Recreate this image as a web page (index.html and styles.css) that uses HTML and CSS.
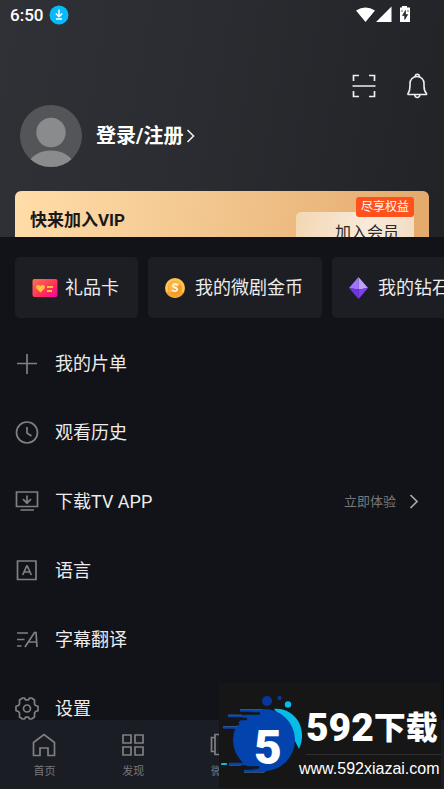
FILE: index.html
```html
<!DOCTYPE html>
<html lang="zh-CN">
<head>
<meta charset="utf-8">
<meta name="viewport" content="width=device-width, initial-scale=1">
<title>我的</title>
<link rel="stylesheet" href="styles.css">
</head>
<body>
<div class="app">
  <header class="top">
    <div class="status">
      <span class="time">6:50</span>
      <svg class="download-badge" width="20" height="20" viewBox="0 0 20 20"><circle cx="10" cy="10" r="9.500" fill="#08b9fb"/><path d="M10 4.500v7M6.800 8.500L10 11.700l3.200-3.200M7 14h6" fill="none" stroke="#fff" stroke-width="1.500"/></svg>
      <svg class="signals" width="56" height="18" viewBox="0 0 56 18"><path d="M0 4.500Q9.500-1.500 19 4.500L9.500 16zM20 16L35.500.5V16z" fill="#fff"/><path d="M44 1.500h2V0h5v1.500h3V16H44z" fill="#fff"/><path d="M49.500 4.500L46.500 9.500h2.200v4l3-5h-2.200zM46 4v2M52 4v2" fill="#292a2e" stroke="#292a2e" stroke-width=".7"/></svg>
    </div>
    <div class="actions">
      <button class="icon-button" aria-label="扫一扫"><svg width="24" height="24" viewBox="0 0 24 24"><path d="M1.500 7V1.500H7M17 1.500h5.500V7M1.500 17v5.500H7M17 22.500h5.500V17M.5 12h23" fill="none" stroke="#eee" stroke-width="1.700"/></svg></button>
      <button class="icon-button" aria-label="通知"><svg width="24" height="26" viewBox="0 0 24 26"><path d="M3 20.500c1.500-2 2-4 2-7.500V10.500c0-4 3-7 7-7s7 3 7 7V13c0 3.500.5 5.500 2.500 7.500v1H3zM10.300 3.300a2 2 0 1 1 4 0M9.500 21.500c.5 4 5 4 5.500 0" fill="none" stroke="#eee" stroke-width="1.600" stroke-linejoin="round"/></svg></button>
    </div>
    <a class="profile" href="#login">
      <svg width="62" height="62" viewBox="0 0 62 62"><defs><clipPath id="face"><circle cx="31" cy="31" r="31"/></clipPath></defs><circle cx="31" cy="31" r="31" fill="#545558"/><g clip-path="url(#face)" fill="#8a8b8d"><circle cx="31" cy="27.500" r="14.700"/><path d="M7 62C11 40 51 40 55 62z"/></g></svg>
      <span class="login">登录/注册</span>
      <svg class="login-arrow" width="10" height="14" viewBox="0 0 10 14"><path d="M1.500 1l6 6-6 6" fill="none" stroke="#eee" stroke-width="1.600"/></svg>
    </a>
    <section class="vip">
      <h2 class="vip-title">快来加入VIP</h2>
      <button class="join">加入会员</button>
      <span class="benefit">尽享权益</span>
    </section>
  </header>

  <main class="content">
    <div class="wallet">
      <a class="chip" href="#card"><svg width="26" height="18" viewBox="0 0 26 18"><defs><linearGradient id="gift" x2="1" y2="1"><stop stop-color="#ff7550"/><stop offset=".65" stop-color="#ff285d"/><stop offset="1" stop-color="#f500ad"/></linearGradient></defs><rect x=".5" width="25" height="18" rx="2" fill="url(#gift)"/><path d="M8.500 13.500L4.500 9.500C3 7 6 4.500 8.500 7c2.500-2.500 5.500 0 4 2.500zM15 7h6v2h-6zM15 11h5v2h-5z" fill="#ffc23d"/></svg><span>礼品卡</span></a>
      <a class="chip" href="#coins"><svg class="coin" width="20" height="20" viewBox="0 0 20 20"><circle cx="10" cy="10" r="10" fill="#ffc44d"/><path d="M1 14a10 10 0 0 0 18 0" fill="#f6a52e"/><circle cx="10" cy="10" r="7" fill="#f59b2a"/><path d="M4 8a7 7 0 0 1 12-2L5 15q-2-3-1-7" fill="#ffb747"/><path d="M13 7c-2-1.300-5-1-5.100.9-.1 2.200 4.600 1.400 4.300 3.600-.2 2-3.500 2.100-5.400.8" fill="none" stroke="#fff6d9" stroke-width="1.900"/></svg><span>我的微剧金币</span></a>
      <a class="chip" href="#diamonds"><svg class="diamond" width="19" height="22" viewBox="0 0 19 22"><path d="M9.500 0L0 11l9.500 1.500z" fill="#a273ff"/><path d="M9.500 0L19 11l-9.500 1.500z" fill="#bea0ff"/><path d="M0 11l9.500 1.500V22z" fill="#7133e8"/><path d="M19 11l-9.500 1.500V22z" fill="#813dfa"/></svg><span>我的钻石</span></a>
    </div>
    <nav class="menu" aria-label="我的功能">
      <a class="row" href="#list"><svg class="line" width="24" height="24" viewBox="0 0 24 24"><path d="M2 11.500h20M12 2v20"/></svg><span>我的片单</span></a>
      <a class="row" href="#history"><svg class="line" width="24" height="24" viewBox="0 0 24 24"><circle cx="12" cy="11.500" r="10.500"/><path d="M12 6v6l4.500 3"/></svg><span>观看历史</span></a>
      <a class="row" href="#tv"><svg class="line" width="24" height="24" viewBox="0 0 24 24"><path d="M1.500 2h21v14.500h-21zM5.500 20h13.500M12 5.500V13M8 9.200l4 4 4-4"/></svg><span>下载TV APP</span><span class="hint">立即体验</span><svg class="row-arrow" width="10" height="16" viewBox="0 0 10 16"><path d="M1.500 1L8 7.500 1.500 14" fill="none" stroke="#aaabad" stroke-width="1.700"/></svg></a>
      <a class="row" href="#language"><svg class="line" width="24" height="24" viewBox="0 0 24 24"><path d="M2.500 2h18.500v18.500H2.500zM7.700 16l4-9h.6l4 9M9.200 13h5.600"/></svg><span>语言</span></a>
      <a class="row" href="#subtitle"><svg class="line" width="24" height="24" viewBox="0 0 24 24"><path d="M2 5h11M2 11.500h7.500M2 18h4.500M10 19L19.500 4.500h1.500l1 14.500M13 14h8.500"/></svg><span>字幕翻译</span></a>
      <a class="row" href="#settings"><svg class="line" width="24" height="24" viewBox="0 0 24 24"><path d="M7.500 1h2l1 1.800h3l1-1.800h2l3 2v4l1 1.500 2.500.7v4.600l-2.500.7-1 1.500v4l-3 2h-2l-1-1.800h-3l-1 1.800h-2l-3-2v-4l-1-1.500-2.500-.7V9.200L3.500 8.500l1-1.500V3z" stroke-linejoin="round"/><circle cx="12" cy="11.500" r="3.500"/></svg><span>设置</span></a>
    </nav>
  </main>

  <nav class="tabs" aria-label="主导航">
    <a class="tab" href="#home"><svg class="line" width="24" height="24" viewBox="0 0 24 24"><path d="M1.500 9.500L12 1.500l10.500 8v13h-6.500V15H8v7.500H1.500z"/></svg><span>首页</span></a>
    <a class="tab" href="#discover"><svg class="line" width="24" height="24" viewBox="0 0 24 24"><path d="M2 2h8v8H2zM14 2h8v8h-8zM2 14h8v8H2zM14 14h8v8h-8z"/></svg><span>发现</span></a>
    <a class="tab" href="#shorts"><svg class="line" width="24" height="24" viewBox="0 0 24 24"><path d="M5 1.500h14v20H5zM5 4.500H1.500v14H5M19 4.500h3.500v14H19M10 8l5 3.500-5 3.500z"/></svg><span>微剧</span></a>
  </nav>

  <aside class="brand">
    <svg width="84" height="84" viewBox="0 0 84 84">
      <path d="M53 14C72 12 88 32 78 54L66 30z" fill="#08bce9"/>
      <circle cx="43" cy="45" r="31" fill="#0343ae"/>
      <path d="M20 15.500h24M8 21h26M3 32.500h16M9 69h22M24 76h20" fill="none" stroke="#0343ae" stroke-width="2.500" stroke-linecap="round"/>
      <path d="M16 18.500h22M12 24h13M8 29h9M12 72.500h25" fill="none" stroke="#161616" stroke-width="2.500" stroke-linecap="round"/>
      <path d="M19 14.500h22M7 20h14M2 31.500h14M8 70.500h12M23 77.500h20" fill="none" stroke="#53688e" stroke-width=".6"/>
      <path d="M1 69h4" stroke="#08bce9" stroke-width="2.200" stroke-linecap="round"/>
      <circle cx="46" cy="6" r="5" fill="#08369b"/><circle cx="58.500" cy="3" r="2.200" fill="#08369b"/><circle cx="67" cy="9.500" r="3.200" fill="#08bce9"/>
    </svg>
    <span class="brand-five">5</span>
    <div class="brand-text"><div class="brand-name"><span class="brand-number">592</span><span>下载</span></div><div class="brand-url">www.592xiazai.com</div></div>
  </aside>
</div>
</body>
</html>
```
FILE: styles.css
```css
* { box-sizing: border-box; }
body { margin: 0; background: #121318; color: #ececed; font-family: Roboto, "Noto Sans CJK SC", sans-serif; }
a { color: inherit; text-decoration: none; }
button { padding: 0; border: 0; background: none; font: inherit; }
svg { display: block; flex: none; }
.app { position: relative; display: flex; flex-direction: column; height: 100vh; overflow: hidden; }
.top { flex: none; background: linear-gradient(100deg, #303136, #2b2c31 45%, #222327); }
.status { display: flex; align-items: center; height: 30px; padding: 0 32px 0 10px; color: #fff; }
.time { font-size: 17px; line-height: 30px; font-weight: 500; }
.download-badge { margin-left: 6px; }
.signals { margin-left: auto; }
.actions { display: flex; justify-content: flex-end; align-items: center; gap: 29px; height: 75px; padding: 36px 15px 0 0; }
.icon-button { display: flex; }
.profile { display: flex; align-items: center; height: 62px; padding-left: 20px; color: #fff; }
.login { margin-left: 14px; font-size: 20px; line-height: 28px; font-weight: 700; }
.login-arrow { margin-left: 3px; }
.vip { position: relative; display: flex; justify-content: space-between; height: 46px; margin: 24px 15px 0; padding: 0 15px; overflow: hidden; border-radius: 6px 6px 0 0; background: linear-gradient(100deg, #ffdda9, #f0c28a 55%, #e4a96b); }
.vip-title { margin: 16px 0 0; color: #191919; font-size: 17px; line-height: 26px; font-weight: 700; }
.join { flex: none; width: 118px; height: 38px; margin-top: 21px; padding-left: 24px; border-radius: 5px; background: linear-gradient(100deg, #f3d7b2, #f8eadb 60%, #f1dcc0); color: #292929; font-size: 16px; }
.benefit { position: absolute; top: 6px; right: 15px; padding: 1px 5px 0; border-radius: 3px; background: #ff511c; color: #fff; font-size: 12px; line-height: 19px; }
.content { flex: 1; min-height: 0; overflow: hidden; }
.wallet { display: flex; gap: 10px; padding: 20px 0 11px 15px; overflow: hidden; }
.chip { display: flex; flex: none; align-items: center; gap: 7px; height: 61px; padding: 0 19px 0 17px; border-radius: 5px; background: #1d1e23; font-size: 18px; line-height: 28px; }
.coin, .diamond { margin-right: 3px; }
.row { display: flex; align-items: center; height: 69px; padding: 0 25px 0 15px; gap: 16px; font-size: 18px; line-height: 28px; }
.line { fill: none; stroke: #7f8084; stroke-width: 1.7; }
.hint { margin-left: auto; color: #77787c; font-size: 13px; line-height: 20px; }
.row-arrow { margin-left: -3px; }
.tabs { display: flex; flex: none; height: 69px; padding-top: 13px; background: #1b1d24; color: #77787c; }
.tab { display: flex; flex: 0 0 20%; flex-direction: column; align-items: center; gap: 6px; font-size: 11px; line-height: 18px; }
.brand { position: absolute; right: 3px; bottom: 1px; display: flex; width: 222px; height: 105px; padding-top: 12px; background: #161616; color: #fff; }
.brand > svg { margin-left: 2px; }
.brand-five { position: absolute; left: 35px; top: 41px; font-size: 48px; line-height: 48px; font-weight: 900; }
.brand-text { flex: 1; margin-top: 12px; }
.brand-name { display: flex; margin-left: 1px; padding-bottom: 5px; border-bottom: 1px solid #303030; font-size: 32px; line-height: 42px; font-weight: 900; white-space: nowrap; }
.brand-number { font-size: 39px; }
.brand-url { margin: 4px 0 0 -6px; font: 16px/20px "Liberation Sans", sans-serif; }
```
